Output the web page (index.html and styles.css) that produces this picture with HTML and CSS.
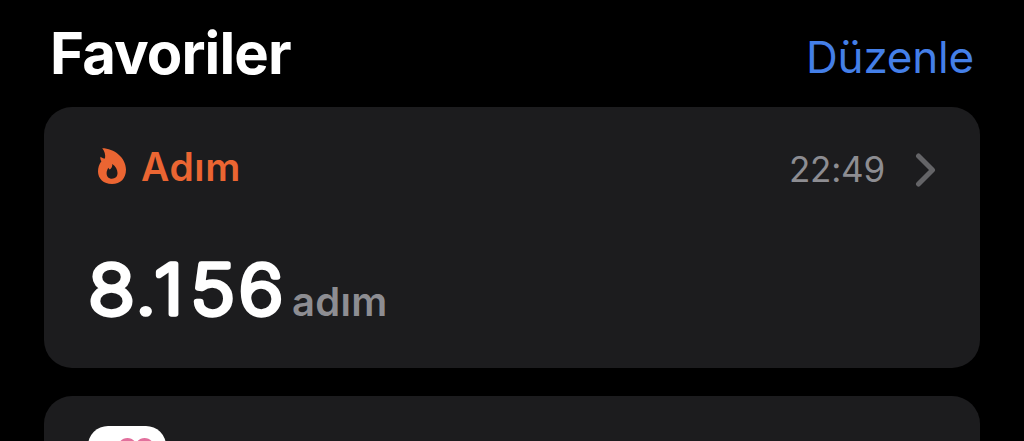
FILE: index.html
```html
<!DOCTYPE html>
<html lang="tr">

<head>
    <meta charset="utf-8">
    <meta name="viewport" content="width=device-width, initial-scale=1.0">
    <title>Favoriler</title>
    <link rel="stylesheet" href="styles.css">
</head>

<body>

    <header>
        <h1>Favoriler</h1>
        <a class="duzenle" href="#">Düzenle</a>
    </header>

    <main>
        <section class="kart">
            <div class="ust">
                <svg class="alev" viewBox="0 0 30 38">
                    <path fill-rule="evenodd" d="M5.200 1.200C17 1.200 29 10.500 29 22.500C29 31.500 23.500 37 15 37C6.500 37 1 31.500 1 24.500C1 20.500 2.200 17 4.400 14.200C3.400 12.800 3.100 11.300 3.500 9.700C4.900 10.900 6.400 11.500 8 11.600C8.700 7.500 7.600 4 5.200 1.200ZM15.200 17C15.600 19.600 14.500 21.300 12.800 22.600C12 22.100 11.600 21.500 11.400 20.800C10.300 22.600 9.600 24.400 9.600 26.300C9.600 29.700 11.700 31.800 14.900 31.800C18.200 31.800 20.500 29.700 20.500 26.100C20.500 22.500 18.600 19.100 15.200 17Z"/>
                </svg>
                <h2>Adım</h2>
                <span class="saat">22:49</span>
                <svg class="ok" viewBox="0 0 22 36">
                    <path d="M3.500 4L17.500 18L3.500 32"/>
                </svg>
            </div>
            <div class="deger">
                <svg class="sayi" viewBox="0 0 200 90">
                    <text x="0.4 42.300 59.200 91.800 134.500" y="71" transform="scale(1.12 1)">8.156</text>
                </svg>
                <span class="birim">adım</span>
            </div>
        </section>

        <section class="kart">
            <div class="saglik">
                <svg viewBox="0 0 78 78">
                    <path d="M48 49C36 40 30 31 30 22C30 16 34 12 39.500 12C43 12 46 14 48 17C50 14 53 12 56.500 12C62 12 66 16 66 22C66 31 60 40 48 49Z"/>
                </svg>
            </div>
        </section>
    </main>

</body>

</html>
```
FILE: styles.css
```css
body {
    margin: 0;
    height: 441px;
    overflow: hidden;
    background-color: #000;
    color: #fff;
    font-family: Inter, "Liberation Sans", sans-serif;
}

h1,
h2 {
    margin: 0;
}

header {
    display: flex;
    justify-content: space-between;
    height: 85px;
    padding: 22px 50px 0 50px;
}

h1 {
    font-size: 58px;
    font-weight: 700;
    line-height: 62px;
    letter-spacing: -0.9px;
}

.duzenle {
    color: #447fe8;
    font-size: 44px;
    line-height: 71px;
    letter-spacing: -0.2px;
    text-decoration: none;
}

main {
    display: flex;
    flex-direction: column;
    gap: 28px;
    height: 334px;
    padding: 0 44px;
    overflow: hidden;
}

.kart {
    box-sizing: border-box;
    flex: none;
    height: 261px;
    padding: 30px 44px 0;
    border-radius: 28px;
    background-color: #1c1c1e;
}

.ust {
    display: flex;
    align-items: center;
    height: 60px;
}

.alev {
    width: 30px;
    height: 38px;
    margin: -2px 0 0 9px;
    fill: #eb6532;
}

h2 {
    margin-left: 14px;
    color: #eb6532;
    font-size: 39px;
    font-weight: 600;
    line-height: 60px;
    letter-spacing: 0.6px;
}

.saat {
    margin: 3px 0 0 auto;
    color: #8d8d92;
    font-size: 35px;
    line-height: 62px;
    letter-spacing: -0.2px;
}

.ok {
    width: 22px;
    height: 36px;
    margin: 5px -1px 0 30px;
    fill: none;
    stroke: #646467;
    stroke-width: 5px;
    stroke-linecap: round;
    stroke-linejoin: round;
}

.deger {
    display: flex;
    margin-top: 46px;
}

/* ince rakamlar, yuvarlak kontur */
.sayi {
    width: 200px;
    height: 90px;
    fill: #fff;
    stroke: #fff;
    stroke-width: 5.6px;
    stroke-linejoin: round;
    font-size: 68px;
    font-weight: 200;
}

.birim {
    margin: 29px 0 0 4px;
    color: #8d8d92;
    font-size: 40px;
    font-weight: 600;
    line-height: 60px;
    letter-spacing: 0.3px;
}

.saglik {
    width: 78px;
    height: 78px;
    border-radius: 20px;
    background-color: #fff;
}

.saglik svg {
    display: block;
    fill: #e2709d;
}
```
